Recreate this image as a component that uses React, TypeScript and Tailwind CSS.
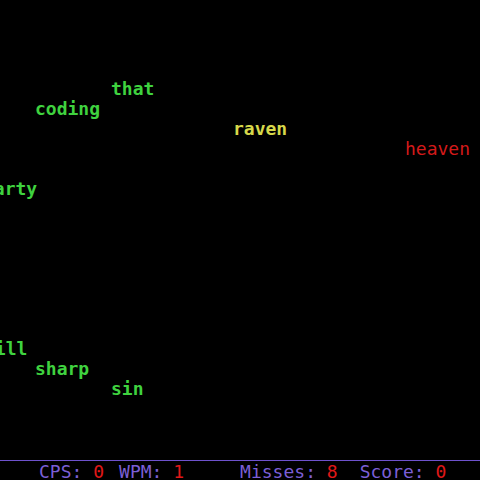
const words = [
  { text: "that", x: 111, y: 79, color: "text-[#3fd23f]", bold: true },
  { text: "coding", x: 35, y: 99, color: "text-[#3fd23f]", bold: true },
  { text: "raven", x: 233, y: 119, color: "text-[#d6d84a]", bold: true },
  { text: "heaven", x: 405, y: 139, color: "text-[#d41a1a]", bold: false },
  { text: "party", x: -17, y: 179, color: "text-[#3fd23f]", bold: true },
  { text: "will", x: -16, y: 339, color: "text-[#3fd23f]", bold: true },
  { text: "sharp", x: 35, y: 359, color: "text-[#3fd23f]", bold: true },
  { text: "sin", x: 111, y: 379, color: "text-[#3fd23f]", bold: true },
];

function Stat({ label, value, className }: { label: string; value: number; className?: string }) {
  return (
    <span className={className}>
      <span className="text-[#7b5fd6]">{label}: </span>
      <span className="text-[#e01818]">{value}</span>
    </span>
  );
}

export default function App() {
  return (
    <div className="w-[480px] h-[480px] bg-black overflow-hidden flex flex-col font-['DejaVu_Sans_Mono',monospace] text-[18px] leading-[20px]">
      <div className="relative h-[460px] shrink-0 overflow-hidden">
        {words.map((w) => (
          <span
            key={w.text}
            className={`absolute whitespace-pre ${w.color} ${w.bold ? "font-bold" : "font-normal"}`}
            style={{ left: w.x, top: w.y }}
          >
            {w.text}
          </span>
        ))}
      </div>

      <div className="border-t border-[#6e52cc] flex whitespace-pre pl-[39px] pt-[1px]">
        <Stat label="CPS" value={0} />
        <Stat label="WPM" value={1} className="ml-[15px]" />
        <Stat label="Misses" value={8} className="ml-[56px]" />
        <Stat label="Score" value={0} className="ml-[22px]" />
      </div>
    </div>
  );
}
